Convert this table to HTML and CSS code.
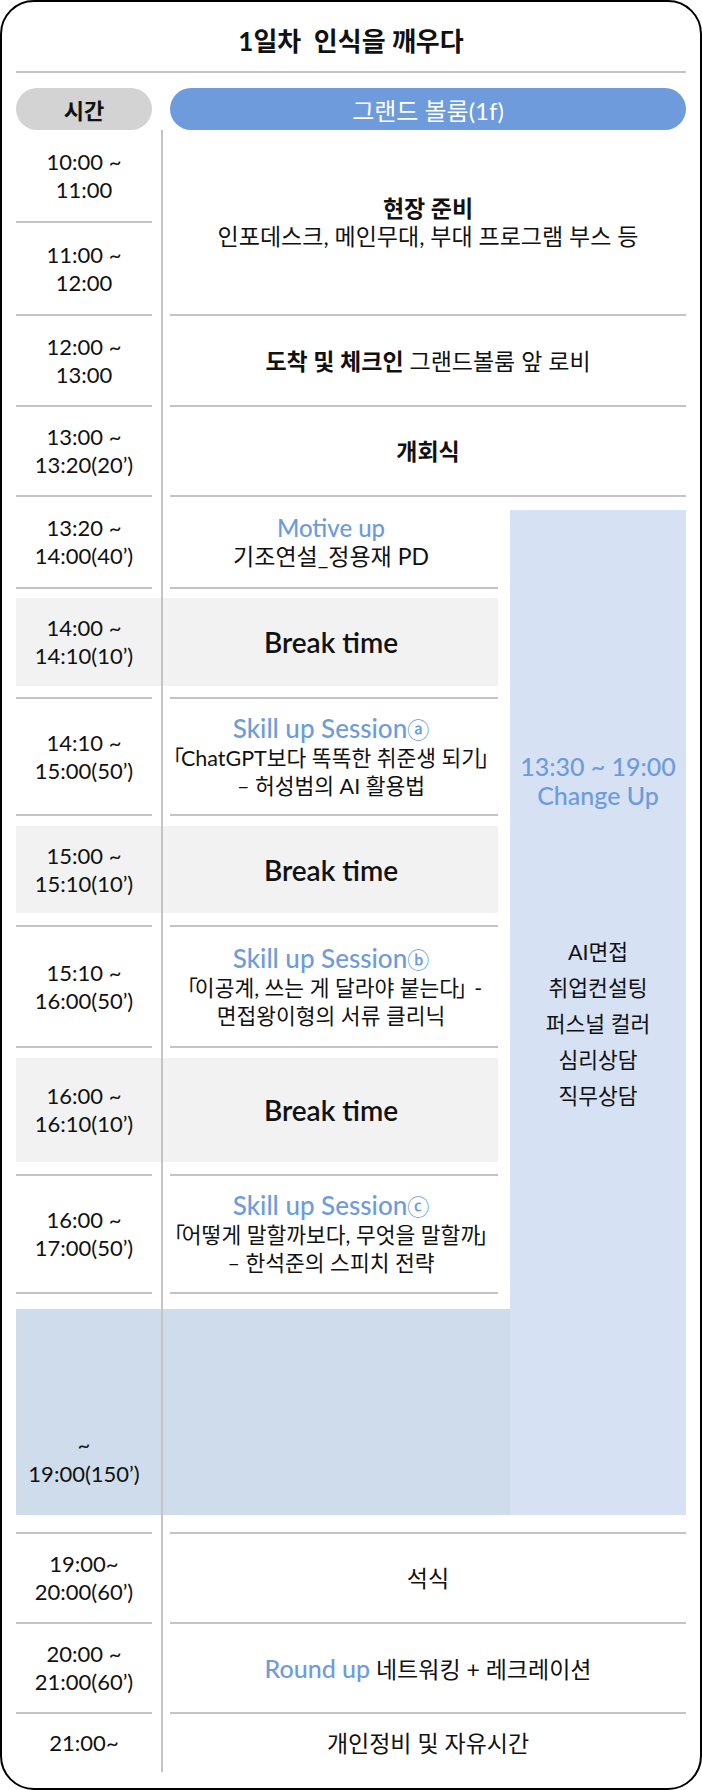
FILE: index.html
```html
<!DOCTYPE html>
<html lang="ko">
<head>
<meta charset="utf-8">
<title>1일차 인식을 깨우다</title>
<link rel="stylesheet" href="styles.css">
</head>
<body>
<div class="card">
  <h1 class="title">1일차&nbsp;&nbsp;인식을 깨우다</h1>
  <div class="heads">
    <div class="pill pill-time">시간</div>
    <div class="pill pill-room">그랜드 볼룸(1f)</div>
  </div>

  <div class="schedule">
    <!-- full-width rows -->
    <div class="row">
      <div class="times">
        <div class="tm">10:00 ~<br>11:00</div>
        <div class="tm">11:00 ~<br>12:00</div>
      </div>
      <div class="ct"><p><b>현장 준비</b><br>인포데스크, 메인무대, 부대 프로그램 부스 등</p></div>
    </div>
    <div class="row h91">
      <div class="tm">12:00 ~<br>13:00</div>
      <div class="ct"><p><b>도착 및 체크인</b> 그랜드볼룸 앞 로비</p></div>
    </div>
    <div class="row h90">
      <div class="tm">13:00 ~<br>13:20(20’)</div>
      <div class="ct"><p><b>개회식</b></p></div>
    </div>

    <!-- rows beside the Change Up column -->
    <div class="split">
      <div class="left">
        <div class="row h92">
          <div class="tm">13:20 ~<br>14:00(40’)</div>
          <div class="ct"><p><span class="accent">Motive up</span><br>기조연설_정용재 PD</p></div>
        </div>
        <div class="break b1">
          <div class="tm">14:00 ~<br>14:10(10’)</div>
          <div class="ct"><p class="brk">Break time</p></div>
        </div>
        <div class="row boxed h119">
          <div class="tm">14:10 ~<br>15:00(50’)</div>
          <div class="ct"><p class="desc"><span class="accent skill">Skill up Session<span class="circ">ⓐ</span></span><br><span class="qb">「</span>ChatGPT보다 똑똑한 취준생 되기<span class="qb">」</span><br>– 허성범의 AI 활용법</p></div>
        </div>
        <div class="break b2">
          <div class="tm">15:00 ~<br>15:10(10’)</div>
          <div class="ct"><p class="brk">Break time</p></div>
        </div>
        <div class="row boxed h123">
          <div class="tm">15:10 ~<br>16:00(50’)</div>
          <div class="ct"><p class="desc"><span class="accent skill">Skill up Session<span class="circ">ⓑ</span></span><br><span class="qb">「</span>이공계, 쓰는 게 달라야 붙는다<span class="qb">」</span>-<br>면접왕이형의 서류 클리닉</p></div>
        </div>
        <div class="break b3">
          <div class="tm">16:00 ~<br>16:10(10’)</div>
          <div class="ct"><p class="brk">Break time</p></div>
        </div>
        <div class="row boxed h120">
          <div class="tm">16:00 ~<br>17:00(50’)</div>
          <div class="ct"><p class="desc"><span class="accent skill">Skill up Session<span class="circ">ⓒ</span></span><br><span class="qb">「</span>어떻게 말할까보다, 무엇을 말할까<span class="qb">」</span><br>– 한석준의 스피치 전략</p></div>
        </div>
        <div class="free">
          <p class="free-time">~<br>19:00(150’)</p>
        </div>
      </div>
      <aside class="side">
        <p class="side-head">13:30 ~ 19:00<br>Change Up</p>
        <ul class="side-list">
          <li>AI면접</li>
          <li>취업컨설팅</li>
          <li>퍼스널 컬러</li>
          <li>심리상담</li>
          <li>직무상담</li>
        </ul>
      </aside>
    </div>

    <!-- evening rows -->
    <div class="tail">
      <div class="row boxed h92">
        <div class="tm">19:00~<br>20:00(60’)</div>
        <div class="ct"><p>석식</p></div>
      </div>
      <div class="row h90">
        <div class="tm">20:00 ~<br>21:00(60’)</div>
        <div class="ct"><p><span class="accent wide">Round up</span> 네트워킹 + 레크레이션</p></div>
      </div>
      <div class="row last h58">
        <div class="tm">21:00~</div>
        <div class="ct"><p>개인정비 및 자유시간</p></div>
      </div>
    </div>
  </div>
</div>
</body>
</html>
```

FILE: styles.css
```css
* {
  box-sizing: border-box;
  margin: 0;
  padding: 0;
}

body {
  margin: 0;
  background: #fff;
  font-family: "Lato", "Noto Sans CJK KR", sans-serif;
  color: #111;
}

.card {
  width: 702px;
  height: 1790px;
  border: 2px solid #000;
  border-radius: 34px;
  padding: 0 14px 16px;
}

.title {
  font-size: 26px;
  font-weight: 700;
  line-height: 36px;
  text-align: center;
  padding: 21px 0 12px;
  border-bottom: 2px solid #c4c4c4;
}

.heads {
  display: grid;
  grid-template-columns: 136px minmax(0, 1fr);
  column-gap: 18px;
  height: 42px;
  margin-top: 15px;
}

.pill {
  display: flex;
  align-items: center;
  justify-content: center;
  border-radius: 21px;
}

.pill-time {
  background: #d3d3d3;
  font-size: 22px;
  font-weight: 700;
}

.pill-room {
  background: #6d9bdc;
  color: #fff;
  font-size: 24px;
}

.schedule {
  position: relative;
}

.schedule::before {
  content: "";
  position: absolute;
  left: 145px;
  top: 0;
  bottom: 0;
  width: 2px;
  background: #c4c4c4;
}

.row,
.break {
  display: grid;
  grid-template-columns: 136px minmax(0, 1fr);
  column-gap: 18px;
}

.tm,
.ct {
  display: flex;
  align-items: center;
  justify-content: center;
  text-align: center;
  white-space: nowrap;
  line-height: 28px;
  border-bottom: 2px solid #c4c4c4;
}

.ct p {
  flex-shrink: 0;
}

.tm {
  font-size: 22px;
}

.ct {
  font-size: 23px;
}

.ct .desc {
  font-size: 21.5px;
}

/* tighten the wide corner brackets */
.qb {
  margin: 0 -0.15em;
}

.times {
  display: flex;
  flex-direction: column;
}

.times .tm {
  height: 93px;
}

.h58 { height: 58px; }
.h90 { height: 90px; }
.h91 { height: 91px; }
.h92 { height: 92px; }
.h119 { height: 119px; }
.h120 { height: 120px; }
.h123 { height: 123px; }

.boxed .tm,
.boxed .ct {
  border-top: 2px solid #c4c4c4;
}

.last .tm,
.last .ct {
  border-bottom: 0;
}

.accent {
  color: #6d9bdc;
  font-size: 24px;
  font-weight: 500;
}

.accent.skill {
  font-size: 26px;
}

.accent.wide {
  font-size: 25px;
}

.circ {
  font-size: 22px;
}

/* middle section with the side column */
.split {
  display: flex;
}

.left {
  width: 494px;
}

.left .row,
.left .break {
  margin-right: 12px;
}

.left .ct {
  padding-right: 6px;
}

.break {
  background: #f2f2f2;
}

.break .tm,
.break .ct {
  border: 0;
}

.b1 { height: 88px; margin-top: 9px; margin-bottom: 11px; }
.b2 { height: 87px; margin-top: 10px; margin-bottom: 12px; }
.b3 { height: 104px; margin-top: 10px; margin-bottom: 12px; }

.brk {
  font-size: 28px;
  font-weight: 600;
}

.free {
  height: 206px;
  margin-top: 15px;
  background: #cfdcec;
}

.free-time {
  width: 136px;
  padding-top: 121px;
  text-align: center;
  font-size: 22px;
  line-height: 29px;
}

.side {
  flex: 1;
  margin-top: 13px;
  background: #d6e2f3;
  padding-top: 242px;
  text-align: center;
}

.side-head {
  color: #6d9bdc;
  font-size: 25px;
  font-weight: 500;
  line-height: 29px;
  margin-bottom: 124px;
}

.side-list {
  list-style: none;
  font-size: 21.5px;
  line-height: 36px;
}

.tail {
  margin-top: 17px;
}
```
